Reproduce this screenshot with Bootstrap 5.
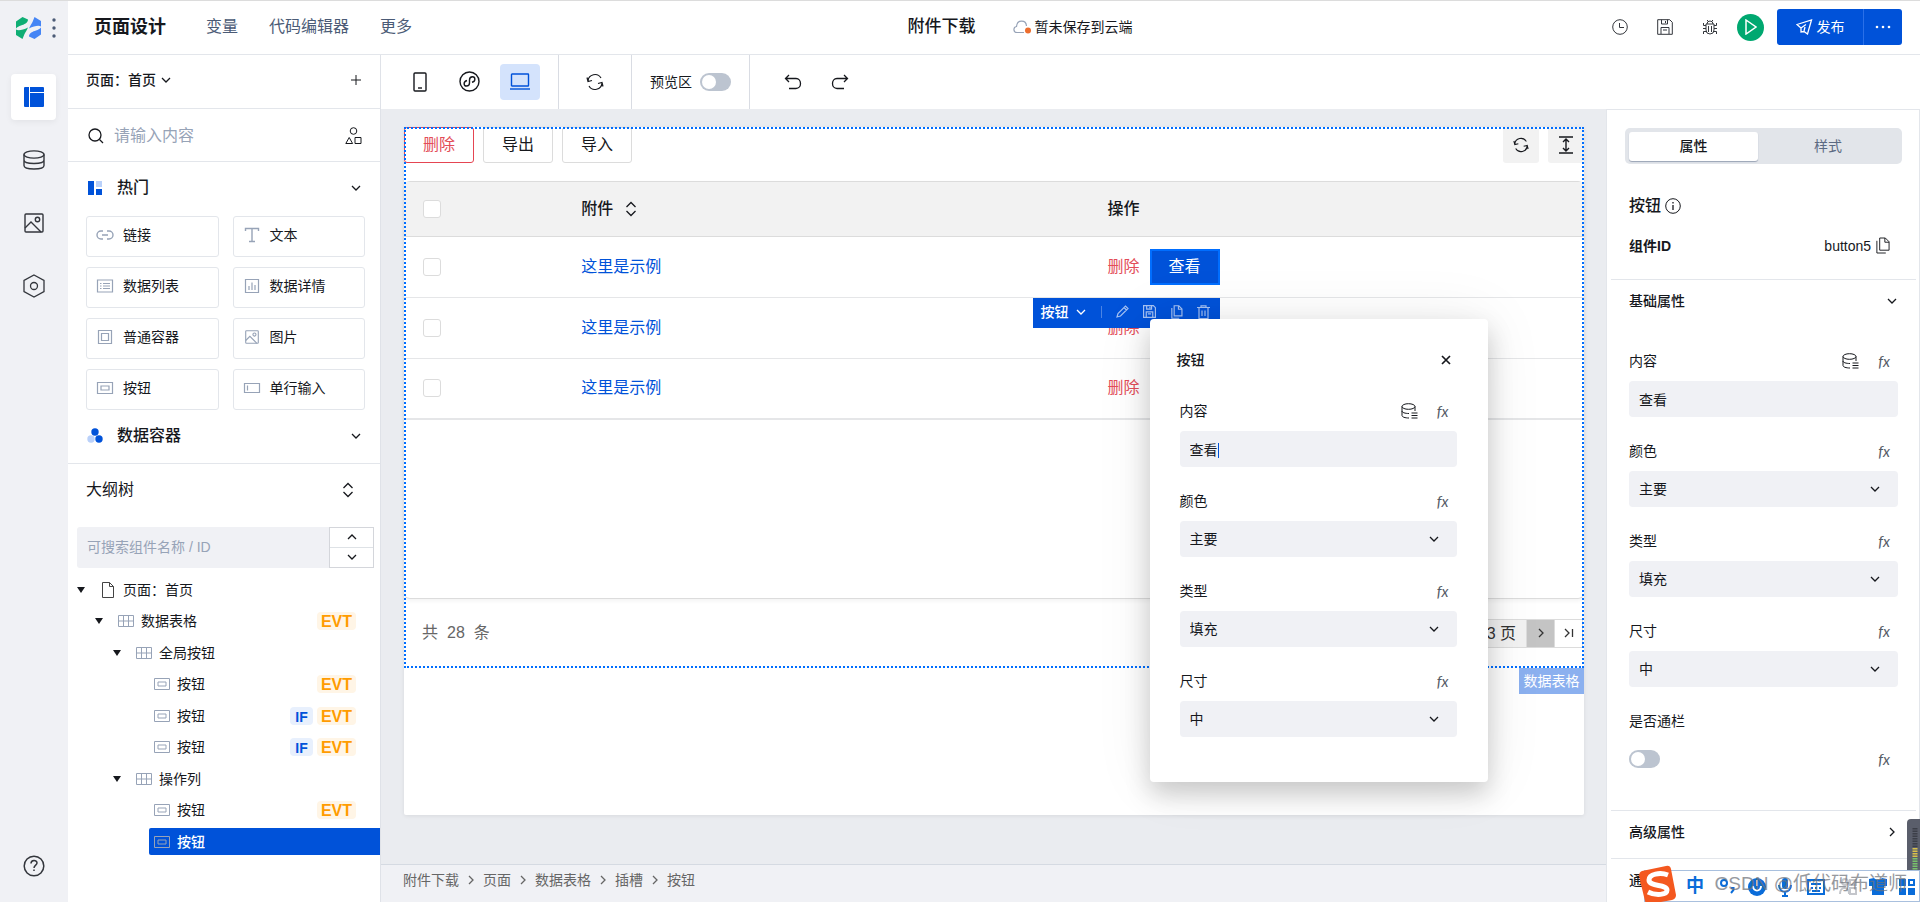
<!DOCTYPE html>
<html lang="zh-CN">
<head>
<meta charset="utf-8">
<meta name="viewport" content="width=device-width, initial-scale=1">
<title>页面设计</title>
<link rel="stylesheet" href="https://cdn.jsdelivr.net/npm/bootstrap@5.3.0/dist/css/bootstrap.min.css">
<style>
:root{--brand:#0052d9;--line:#e3e6eb;--soft:#f0f1f5;--ink:#16181d;--muted:#4b5b76;--icon:#97a3b7}
body{font-family:"Liberation Sans","Noto Sans CJK SC",sans-serif;font-size:14px;line-height:20px;color:var(--ink);border-top:1px solid #dcdcdc;overflow:hidden}
button{background:none;border:0;padding:0;color:inherit;line-height:inherit}
a{color:inherit;text-decoration:none}
svg{display:block;flex:none}
svg:not([fill]){fill:none}
svg:not([stroke]){stroke:currentColor}
.t16{font-size:16px;line-height:24px}
.t17{font-size:17px;line-height:24px}
.t18{font-size:18px;line-height:26px}
.bold{font-weight:500}
.edge-b{border-bottom:1px solid var(--line)}
/* icon rail */
.rail{width:68px;background:var(--soft);flex:none;color:#33363c}
.rail-logo{height:53px;padding:0 12px 0 16px}
.rail-btn{width:45px;height:46px;margin:0 0 17px 11px;border-radius:4px;display:grid;place-items:center}
.rail-btn.on{background:#fff;color:var(--brand);box-shadow:0 2px 6px #0000000f}
.rail-btn.help{margin-bottom:13px}
/* header */
.topbar{height:54px;padding:0 18px 0 26px}
.topbar .menu-links{gap:31px;color:var(--muted);margin-left:40px}
.cloud{margin:0 4px 0 37px}
.topbar .quick-acts{gap:29px;margin-right:19px}
.run{width:27px;height:27px;border-radius:50%;background:#00a870;color:#fff;display:grid;place-items:center}
.publish{background:var(--brand);color:#fff;height:36px;border-radius:3px;margin-left:13px}
.publish .more{width:39px;border-left:1px solid #2a70e8}
.publish .go{width:86px}
/* left panel */
.side{width:313px;flex:none;border-right:1px solid #dfe2e8}
.side .bar{padding:0 18px}
.side .page-row{height:54px;padding-bottom:3px}
.side .find-row{height:53px;padding-top:3px}
.side input{border:0;outline:0;background:none;color:var(--ink)}
.side input::placeholder{color:#97a3b7}
.comp-grid{display:grid;grid-template-columns:1fr 1fr;gap:10px 14px;padding:2px 15px 0 18px}
.comp{height:41px;border:1px solid var(--line);border-radius:3px;display:flex;align-items:center;gap:9px;padding:0 0 2px 9px}
.comp svg{color:var(--icon)}
.tree-search{margin:11px 6px 6px 9px;height:41px}
.tree-search input{background:var(--soft);border-radius:3px 0 0 3px;padding:0 10px}
.step{width:45px;border:1px solid #d4d6db}
.step button{display:grid;place-items:center}
.tree{height:284px;display:grid;grid-auto-rows:1fr;align-items:center;list-style:none;margin:0;padding:0}
.tree li{display:flex;align-items:center;height:27px;padding-right:24px}
.tree .caret{width:8px;margin-right:15px}
.tree .ico{width:16px;margin-right:7px;color:var(--icon)}
.lv0{margin-left:9px}.lv1{margin-left:27px}.lv2{margin-left:45px}.lv3{margin-left:81px;padding-left:5px}
.lv0 .ico{color:#444}
.tree .picked{background:var(--brand);color:#fff;border-radius:2px 0 0 2px;font-weight:500}
.tag{border-radius:4px;height:18px;line-height:20px;font-weight:700;text-align:center;margin-left:4px}
.tag-evt{width:39px;background:#fff5e6;color:#ff9c00}
.tag-if{width:23px;background:#e8f0fd;color:var(--brand)}
/* toolbar */
.tools{height:54px}
.tools .grp{display:flex;align-items:center;justify-content:center;border-right:1px solid #d9dce3}
.device{width:40px;height:36px;border-radius:4px;display:grid;place-items:center}
.device.on{background:#d4e3fc;color:var(--brand)}
.tgl.form-check-input{width:31px;height:18px;margin:0;border:0;border-radius:9px;background-color:#bcc4d0;background-size:auto;background-position:left 1px center;background-repeat:no-repeat;background-image:url("data:image/svg+xml,%3Csvg xmlns='http://www.w3.org/2000/svg' width='16' height='16'%3E%3Ccircle cx='8' cy='8' r='7' fill='%23fff'/%3E%3C/svg%3E")}
/* canvas */
.stage{background:#eaecf0;min-width:0}
.sheet{margin:18px 22px 49px 23px;background:#fff;border-radius:2px;box-shadow:0 1px 4px #00000014}
.grid-box{position:relative}
.grid-box::after{content:"";position:absolute;inset:0;border:2px dotted #006eff;pointer-events:none}
.act{height:36px;width:70px;border:1px solid #dcdcdc;border-radius:3px;line-height:34px}
.act.danger{border-color:#e54552}
.danger{color:#e34d59}
.sq{width:36px;height:36px;background:#f2f2f2;border-radius:3px;display:grid;place-items:center}
.table-box{margin-top:18px;height:418px;border:1px solid #dcdcdc;border-width:1px 0;border-radius:6px;box-shadow:0 2px 4px #0000000d}
.data{width:100%;table-layout:fixed;border-collapse:separate;border-spacing:0;font-size:16px}
.data th,.data td{padding:0 0 0 12px;border-bottom:1px solid #e5e6e8;height:61px}
.data th{height:55px;background:#f2f2f2;border-color:#dcdcdc;font-weight:500}
.data th:first-child,.data td:first-child{padding-left:19px}
.data tr:last-child td{border-bottom-width:2px}
.data .form-check-input{width:18px;height:18px;margin:0;border-color:#dcdcdc;border-radius:3px;display:block}
.data a{color:var(--brand)}
.anchor{position:relative}
.view-btn{width:70px;height:36px;background:var(--brand);border:2px solid #006eff;color:#fff;line-height:30px}
.quick{position:absolute;top:49px;right:0;width:187px;height:30px;background:var(--brand);color:#fff;z-index:2;padding:0 10px 2px 8px;font-size:14px}
.quick .dim{color:#a5c1f2}
.quick .sep{width:1px;height:12px;background:#4b84e4;margin:0 14px}
.pop{position:absolute;top:70px;left:0;width:338px;background:#fff;border-radius:4px;box-shadow:0 12px 26px #00000030,0 0 60px #00000014;z-index:3;padding:31px 31px 21px 30px;font-size:14px}
.pop-head{margin:0 6px 31px -3px}
.grid-foot{height:69px;padding:0 1px 0 18px;color:#666}
.pager{height:29px;border:1px solid #dcdcdc;color:#333}
.pager span{background:#f2f2f2;padding:0 10px 0 12px;line-height:27px}
.pager button{width:28px;border-left:1px solid #dcdcdc;display:grid;place-items:center}
.pager .next{background:#c4c4c4}
.box-tag{position:absolute;right:0;top:100%;height:26px;width:65px;background:#8bb0ef;color:#fff;text-align:center;line-height:26px}
.crumbs{height:38px;border-top:1px solid #d5dae2;background:var(--soft);color:#666;padding:5px 22px;gap:6px}
.crumbs svg{width:12px;height:20px}
/* fields */
.field{margin-bottom:24px}
.field .top{height:20px;margin-bottom:10px;padding-right:8px}
.field .src{margin-right:19px}
.ctl{display:block;width:100%;height:36px;border:0;border-radius:4px;background-color:#f0f1f5;padding:0 10px;color:var(--ink);font-size:14px;line-height:20px;outline:0}
select.ctl{appearance:none;background-repeat:no-repeat;background-position:right 17px center;background-image:url("data:image/svg+xml,%3Csvg xmlns='http://www.w3.org/2000/svg' width='12' height='12' fill='none' stroke='%2316181d' stroke-width='1.3'%3E%3Cpath d='M2 4l4 4 4-4'/%3E%3C/svg%3E")}
.fx{font:italic 15px/20px Lato,sans-serif;color:#555b66}
.cursor{position:absolute;left:38px;top:12px;width:1px;height:15px;background:var(--brand)}
/* property panel */
.props{width:314px;flex:none;border:1px solid var(--line);border-bottom:0;padding:18px 3px 0 4px;overflow:hidden}
.props .pad{padding:0 18px}
.props .fields{padding-top:24px}
.props .title-row{margin-top:30px}
.props .id-row{margin:18px 0 23px}
.props .switch-row{margin:18px 0 41px}
.seg{margin:0 14px;height:36px;background:#e2e5ea;border-radius:5px;padding:4px;color:#5c6a82}
.seg button{flex:1;height:29px;line-height:27px}
.seg .on{background:#fff;border-radius:3px;color:var(--ink);box-shadow:0 1px 1px #9aa3b5;flex:0 0 48%}
.sec{height:48px;border-top:1px solid var(--line)}
/* overlays from the desktop */
.meter{position:fixed;right:0;bottom:32px;width:13px;height:51px;background:#5a5e6b;border-radius:4px 0 0 0}
.ime{position:fixed;right:0;bottom:0;width:276px;height:32px;background:#fff;border:1px solid #a9c0de;color:#0a6cd9;font-size:18px;font-weight:700}
.ime .slot{position:absolute;top:0;height:30px;display:grid;place-items:center}
.ime .brand-mark{left:-8px;top:-6px;height:38px}
.credit{position:absolute;right:12px;top:0;line-height:26px;font-size:19px;font-weight:400;color:#6e727a;opacity:.72;white-space:nowrap}
</style>
</head>
<body>
<svg width="0" height="0" class="position-absolute" aria-hidden="true">
<symbol id="down" viewBox="0 0 12 12"><path d="M2 4l4 4 4-4" stroke-width="1.3"/></symbol>
<symbol id="up" viewBox="0 0 12 12"><path d="M2 8l4-4 4 4" stroke-width="1.3"/></symbol>
<symbol id="right" viewBox="0 0 12 12"><path d="M4 2l4 4-4 4" stroke-width="1.3"/></symbol>
<symbol id="updown" viewBox="0 0 12 16"><path d="M1.500 6L6 1.500 10.500 6M1.500 10L6 14.500 10.500 10" stroke-width="1.300"/></symbol>
<symbol id="caret" viewBox="0 0 8 6"><path d="M0 0h8L4 6z" fill="#16181d" stroke="none"/></symbol>
<symbol id="cells" viewBox="0 0 16 12"><path d="M.5.5h15v11H.5zM.5 6h15M5.500.5v11M10.500.5v11"/></symbol>
<symbol id="btn" viewBox="0 0 16 12"><path d="M.5.5h15v11H.5zM4 4h8v4H4z"/></symbol>
<symbol id="pic" viewBox="0 0 20 20"><rect x="1" y="1" width="18" height="18" rx="1"/><circle cx="13.500" cy="6.500" r="2.200"/><path d="M1 15l6-6 10 10"/></symbol>
<symbol id="copy" viewBox="0 0 16 18"><path d="M5 1h6l4 4v9H5zM10.500 1v4.500H15M2 4v13h9.500"/></symbol>
<symbol id="save" viewBox="0 0 16 16"><path d="M.7.7h12l2.600 2.600v12H.7zM4.500.7V5h6V.7M8.500 2v2M4 15V8.500h8V15M6 11h4"/></symbol>
<symbol id="dblist" viewBox="0 0 17 16"><ellipse cx="7.500" cy="3.500" rx="6.500" ry="2.800"/><path d="M1 3.500v9c0 1.500 3 2.500 7 2.500M14 3.500V8M1 8c0 1.500 3 2.500 7 2.500M10.500 10h6M10.500 12.500h6M10.500 15h6"/></symbol>
<symbol id="sync" viewBox="0 0 18 18"><path d="M2 8a7 7 0 0 1 13-3M16 10a7 7 0 0 1-13 3M1 4.500L2 8.500l4-1M17 13.500l-1-4-4 1" stroke-width="1.200"/></symbol>
</svg>

<div class="d-flex" style="height:calc(100vh - 1px)">
 <nav class="rail d-flex flex-column" aria-label="主导航">
  <div class="rail-logo d-flex align-items-center justify-content-between">
   <svg width="25" height="22" viewBox="0 0 25 22" stroke="none"><path d="M0 4.500L6.500 0 12 2.500C12 6 8 7.500 5 8.500 3 9.200 1.200 10 0 11.500zM0 12.500C2 14 7 13 12 10.500 11 13 9.500 15 8.500 17L6.500 22 0 18z" fill="#0fae74"/><path d="M25 17.500L18.500 22 13 19.500C13 16 17 14.500 20 13.500c2-.7 3.800-1.500 5-3zM25 9.500C23 8 18 9 13 11.500 14 9 15.500 7 16.500 5L18.500 0 25 4z" fill="#4585f5"/></svg>
   <svg width="4" height="20" viewBox="0 0 4 20" stroke="none" fill="#4b5b76"><circle cx="2" cy="2" r="1.700"/><circle cx="2" cy="10" r="1.700"/><circle cx="2" cy="18" r="1.700"/></svg>
  </div>
  <div class="pt-1 mt-3"></div>
  <button class="rail-btn on" aria-label="页面"><svg width="20" height="20" viewBox="0 0 20 20" fill="currentColor" stroke="none"><path d="M1 0h4v20H1a1 1 0 0 1-1-1V1a1 1 0 0 1 1-1zM6 0h13a1 1 0 0 1 1 1v4H6zM6 6h14v13a1 1 0 0 1-1 1H6z"/></svg></button>
  <button class="rail-btn" aria-label="数据"><svg width="22" height="20" viewBox="0 0 22 20" stroke-width="1.400"><ellipse cx="11" cy="4.500" rx="10" ry="3.600"/><path d="M1 4.500v11C1 17.500 5 19 11 19s10-1.500 10-3.500v-11M1 10c0 2 4 3.500 10 3.500S21 12 21 10"/></svg></button>
  <button class="rail-btn" aria-label="素材"><svg width="20" height="20" stroke-width="1.400"><use href="#pic"/></svg></button>
  <button class="rail-btn" aria-label="设置"><svg width="22" height="24" viewBox="0 0 22 24" stroke-width="1.300"><path d="M11 1l10 5.500v11L11 23 1 17.500v-11z"/><circle cx="11" cy="12" r="3.500"/></svg></button>
  <button class="rail-btn help mt-auto" aria-label="帮助"><svg width="22" height="22" viewBox="0 0 22 22" stroke-width="1.500"><circle cx="11" cy="11" r="9.800"/><path d="M8 8.500c0-4 6-4 6-.5 0 2-3 2.300-3 5M11 14.500V16"/></svg></button>
 </nav>

 <div class="d-flex flex-column flex-fill" style="min-width:0">
  <header class="topbar edge-b d-flex align-items-center">
   <div class="d-flex align-items-center flex-fill" style="flex-basis:0">
    <h1 class="t18 fw-bold m-0">页面设计</h1>
    <nav class="menu-links d-flex t16"><a href="#">变量</a><a href="#">代码编辑器</a><a href="#">更多</a></nav>
   </div>
   <div class="d-flex align-items-center ms-3">
    <span class="t17 bold">附件下载</span>
    <svg class="cloud" width="18" height="14" viewBox="0 0 18 14" stroke="#97a3b7" stroke-width="1.200"><path d="M11 12.500H4c-4 0-4-5.500-.5-6C4-.5 13-.5 13.500 6"/><circle cx="15" cy="10.500" r="3" fill="#ed6d2d" stroke="none"/></svg>
    <span>暂未保存到云端</span>
   </div>
   <div class="d-flex align-items-center justify-content-end flex-fill" style="flex-basis:0">
    <div class="quick-acts d-flex align-items-center">
     <button aria-label="历史"><svg width="16" height="16" viewBox="0 0 16 16" stroke="#33363c"><circle cx="8" cy="8" r="7.300"/><path d="M7.500 4v4.500H12"/></svg></button>
     <button aria-label="保存"><svg width="16" height="16" stroke="#33363c"><use href="#save"/></svg></button>
     <button aria-label="调试"><svg width="16" height="16" viewBox="0 0 16 16" stroke="#33363c"><path d="M4 5h8v6a4 4 0 0 1-8 0zM5 5a3 3 0 0 1 6 0M1.500 4v2.500H4M14.500 4v2.500H12M1 9.500h3M15 9.500h-3M1.500 15v-2.500H4M14.500 15v-2.500H12M6.500 7v6M9.500 7v6M5 1l1.500 1.500M11 1L9.500 2.500"/></svg></button>
    </div>
    <button class="run" aria-label="运行"><svg width="12" height="16" viewBox="0 0 12 16" stroke-width="1.500"><path d="M1 1l10 7-10 7z"/></svg></button>
    <div class="publish d-flex">
     <button class="go d-flex align-items-center justify-content-center gap-1"><svg width="17" height="16" viewBox="0 0 17 16" stroke-width="1.300"><path d="M1 5.500L15.500 1 11.500 15 8 12.500 5 13V9zM5 9l5-3.500M8 12l1-4"/></svg>发布</button>
     <button class="more d-flex align-items-center justify-content-center" aria-label="更多"><svg width="16" height="4" viewBox="0 0 16 4" fill="#fff" stroke="none"><circle cx="2" cy="2" r="1.300"/><circle cx="8" cy="2" r="1.300"/><circle cx="14" cy="2" r="1.300"/></svg></button>
    </div>
   </div>
  </header>

  <div class="d-flex flex-fill" style="min-height:0">
   <aside class="side">
    <div class="bar page-row edge-b d-flex align-items-center">
     <button class="bold d-flex align-items-center gap-1">页面：首页<svg width="12" height="12"><use href="#down"/></svg></button>
     <button class="ms-auto" aria-label="新建"><svg width="12" height="12" viewBox="0 0 12 12"><path d="M6 1v10M1 6h10"/></svg></button>
    </div>
    <label class="bar find-row edge-b d-flex align-items-center">
     <svg style="margin:0 8px 0 2px" width="16" height="16" viewBox="0 0 16 16" stroke-width="1.300"><circle cx="7" cy="7" r="6"/><path d="M11.500 11.500L15 15"/></svg>
     <input class="t16 flex-fill" placeholder="请输入内容" aria-label="搜索组件" style="min-width:0">
     <svg width="17" height="18" viewBox="0 0 17 18"><circle cx="8.500" cy="4" r="3.300"/><path d="M.8 16.500l3.400-6 3.400 6zM10 10.500h6v6h-6z"/></svg>
    </label>
    <div class="bar d-flex align-items-center" style="height:52px">
     <svg style="margin:0 15px 0 2px" width="14" height="14" viewBox="0 0 14 14" stroke="none"><path d="M0 0h6v14H0zM8 8h6v6H8z" fill="#0052d9"/><path d="M8 0h6v6H8z" fill="#bad1fa"/></svg>
     <span class="t16 bold">热门</span><svg class="ms-auto" width="12" height="12"><use href="#down"/></svg>
    </div>
    <div class="comp-grid">
     <div class="comp"><svg width="18" height="18" viewBox="0 0 18 18" stroke-width="1.400"><path d="M7 5H5a4 4 0 0 0 0 8h2M11 5h2a4 4 0 0 1 0 8h-2M6 9h6"/></svg>链接</div>
     <div class="comp"><svg width="18" height="18" viewBox="0 0 18 18" stroke-width="1.400"><path d="M2.500 5V2.500h13V5M9 2.500v13M6 15.500h6"/></svg>文本</div>
     <div class="comp"><svg width="18" height="18" viewBox="0 0 18 18" stroke-width="1.200"><path d="M1.500 3h15v12h-15zM4 6.500h1.500M7 6.500h7M4 9h1.500M7 9h7M4 11.500h1.500M7 11.500h7"/></svg>数据列表</div>
     <div class="comp"><svg width="18" height="18" viewBox="0 0 18 18" stroke-width="1.200"><path d="M2.500 2.500h13v13h-13zM6 9v4M9 5.500V13M12 8v5"/></svg>数据详情</div>
     <div class="comp"><svg width="18" height="18" viewBox="0 0 18 18" stroke-width="1.200"><path d="M2.500 2.500h13v13h-13zM5.500 5.500h7v7h-7z"/></svg>普通容器</div>
     <div class="comp"><svg width="18" height="14" stroke-width="1.600"><use href="#pic"/></svg>图片</div>
     <div class="comp"><svg width="18" height="12" stroke-width="1.200"><use href="#btn"/></svg>按钮</div>
     <div class="comp"><svg width="18" height="18" viewBox="0 0 18 18" stroke-width="1.200"><path d="M1.500 4.500h15v9h-15zM4.500 6.500v5"/></svg>单行输入</div>
    </div>
    <div class="bar edge-b d-flex align-items-center" style="height:54px">
     <svg style="margin:0 14px 0 1px" width="16" height="16" viewBox="0 0 16 16" stroke="none" fill="#0052d9"><circle cx="8" cy="4" r="3.700"/><circle cx="4" cy="11" r="3.700" fill="#bad1fa"/><circle cx="12" cy="11" r="3.700"/></svg>
     <span class="t16 bold">数据容器</span><svg class="ms-auto" width="12" height="12"><use href="#down"/></svg>
    </div>
    <div class="bar d-flex align-items-center" style="height:52px"><span class="t16">大纲树</span><svg class="ms-auto me-2" width="12" height="16"><use href="#updown"/></svg></div>
    <div class="tree-search d-flex">
     <input class="flex-fill" placeholder="可搜索组件名称 / ID" aria-label="搜索大纲树">
     <div class="step d-flex flex-column"><button class="flex-fill border-bottom" aria-label="上一个"><svg width="12" height="12"><use href="#up"/></svg></button><button class="flex-fill" aria-label="下一个"><svg width="12" height="12"><use href="#down"/></svg></button></div>
    </div>
    <ul class="tree">
     <li class="lv0"><svg class="caret" height="6"><use href="#caret"/></svg><svg class="ico" height="16" viewBox="0 0 16 16"><path d="M2.500.5h7l4 4v11h-11zM9.500.5v4h4"/></svg>页面：首页</li>
     <li class="lv1"><svg class="caret" height="6"><use href="#caret"/></svg><svg class="ico" height="12"><use href="#cells"/></svg>数据表格<span class="tag tag-evt t16 ms-auto">EVT</span></li>
     <li class="lv2"><svg class="caret" height="6"><use href="#caret"/></svg><svg class="ico" height="12"><use href="#cells"/></svg>全局按钮</li>
     <li class="lv3"><svg class="ico" height="12"><use href="#btn"/></svg>按钮<span class="tag tag-evt t16 ms-auto">EVT</span></li>
     <li class="lv3"><svg class="ico" height="12"><use href="#btn"/></svg>按钮<span class="tag tag-if ms-auto">IF</span><span class="tag tag-evt t16">EVT</span></li>
     <li class="lv3"><svg class="ico" height="12"><use href="#btn"/></svg>按钮<span class="tag tag-if ms-auto">IF</span><span class="tag tag-evt t16">EVT</span></li>
     <li class="lv2"><svg class="caret" height="6"><use href="#caret"/></svg><svg class="ico" height="12"><use href="#cells"/></svg>操作列</li>
     <li class="lv3"><svg class="ico" height="12"><use href="#btn"/></svg>按钮<span class="tag tag-evt t16 ms-auto">EVT</span></li>
     <li class="lv3 picked"><svg class="ico" height="12"><use href="#btn"/></svg>按钮</li>
    </ul>
   </aside>

   <div class="d-flex flex-column flex-fill" style="min-width:0">
    <div class="tools d-flex">
     <div class="grp" style="width:178px;gap:10px">
      <button class="device" aria-label="手机"><svg width="14" height="20" viewBox="0 0 14 20" stroke-width="1.400"><rect x="1" y="1" width="12" height="18" rx="1"/><path d="M5 16h4"/></svg></button>
      <button class="device" aria-label="小程序"><svg width="21" height="21" viewBox="0 0 21 21" stroke-width="1.400"><circle cx="10.500" cy="10.500" r="9.500"/><path d="M8 9.500c-4 1-3.500 5.500-.5 5.500 2 0 3-1.200 3-3V9c0-2 1-3.200 3-3.200 3 0 3.500 4.500-.5 5.500"/></svg></button>
      <button class="device on" aria-label="电脑"><svg width="20" height="17" viewBox="0 0 20 17" stroke-width="1.400"><rect x="1.500" y="1" width="17" height="12" rx=".5"/><path d="M0 16h20"/></svg></button>
     </div>
     <div class="grp" style="width:73px"><button aria-label="刷新"><svg width="18" height="18"><use href="#sync"/></svg></button></div>
     <div class="grp" style="width:118px;gap:8px"><label for="preview">预览区</label><input id="preview" class="form-check-input tgl" type="checkbox" role="switch"></div>
     <div class="d-flex align-items-center" style="gap:29px;padding-left:34px">
      <button aria-label="撤销"><svg width="18" height="16" viewBox="0 0 18 16" stroke-width="1.300"><path d="M5 1L1.500 4.500 5 8M1.500 4.500H12c6 0 6 10 0 10H5"/></svg></button>
      <button aria-label="重做"><svg width="18" height="16" viewBox="0 0 18 16" stroke-width="1.300"><path d="M13 1l3.500 3.500L13 8M16.500 4.500H6c-6 0-6 10 0 10h7"/></svg></button>
     </div>
    </div>

    <div class="d-flex flex-fill" style="min-height:0">
     <main class="stage d-flex flex-column flex-fill">
      <div class="sheet flex-fill">
       <section class="grid-box">
        <div class="d-flex t16" style="gap:9px">
         <button class="act danger">删除</button><button class="act">导出</button><button class="act">导入</button>
         <button class="sq ms-auto" aria-label="刷新"><svg width="16" height="16"><use href="#sync"/></svg></button>
         <button class="sq" aria-label="行高"><svg width="14" height="18" viewBox="0 0 14 18" stroke-width="1.400"><path d="M0 1h14M0 17h14M7 3v12M4 6l3-3 3 3M4 12l3 3 3-3"/></svg></button>
        </div>
        <div class="table-box">
         <table class="data">
          <colgroup><col style="width:14%"><col style="width:44.6%"><col></colgroup>
          <thead><tr><th><input class="form-check-input" type="checkbox" aria-label="全选"></th><th><div class="d-flex align-items-center" style="gap:12px">附件<svg width="12" height="16"><use href="#updown"/></svg></div></th><th>操作</th></tr></thead>
          <tbody>
           <tr><td><input class="form-check-input" type="checkbox" aria-label="选择第1行"></td><td><a href="#">这里是示例</a></td><td>
            <div class="d-flex align-items-center" style="gap:10px"><button class="danger">删除</button>
             <div class="anchor"><button class="view-btn">查看</button>
              <div class="quick d-flex align-items-center">
               <button class="bold d-flex align-items-center" style="gap:6px">按钮<svg width="12" height="12"><use href="#down"/></svg></button><span class="sep"></span>
               <div class="dim d-flex align-items-center justify-content-between flex-fill">
                <button aria-label="编辑"><svg width="13" height="13" viewBox="0 0 13 13" stroke-width="1.200"><path d="M1 12l1-3.500L9.500 1 12 3.500 4.500 11zM8 2.500L10.500 5"/></svg></button>
                <button aria-label="保存"><svg width="13" height="13" stroke-width="1.500"><use href="#save"/></svg></button>
                <button aria-label="复制"><svg width="13" height="14" stroke-width="1.500"><use href="#copy"/></svg></button>
                <button aria-label="删除组件"><svg width="13" height="14" viewBox="0 0 13 14" stroke-width="1.200"><path d="M0 2.500h13M4 2.500V.8h5v1.700M2 2.500v11h9v-11M5 5.500V11M8 5.500V11"/></svg></button>
               </div>
              </div>
              <div class="pop">
               <div class="pop-head d-flex align-items-center justify-content-between"><span class="bold">按钮</span><button aria-label="关闭"><svg width="10" height="10" viewBox="0 0 10 10" stroke-width="1.700"><path d="M1 1l8 8M9 1L1 9"/></svg></button></div>
               <div class="field"><div class="top d-flex align-items-center"><label for="p1">内容</label><svg class="src ms-auto" width="17" height="16"><use href="#dblist"/></svg><button class="fx">fx</button></div><div class="position-relative"><input id="p1" class="ctl" value="查看"><span class="cursor"></span></div></div>
               <div class="field"><div class="top d-flex justify-content-between"><label for="p2">颜色</label><button class="fx">fx</button></div><select id="p2" class="ctl"><option>主要</option></select></div>
               <div class="field"><div class="top d-flex justify-content-between"><label for="p3">类型</label><button class="fx">fx</button></div><select id="p3" class="ctl"><option>填充</option></select></div>
               <div class="field"><div class="top d-flex justify-content-between"><label for="p4">尺寸</label><button class="fx">fx</button></div><select id="p4" class="ctl"><option>中</option></select></div>
              </div>
             </div></div></td></tr>
           <tr><td><input class="form-check-input" type="checkbox" aria-label="选择第2行"></td><td><a href="#">这里是示例</a></td><td><button class="danger">删除</button></td></tr>
           <tr><td><input class="form-check-input" type="checkbox" aria-label="选择第3行"></td><td><a href="#">这里是示例</a></td><td><button class="danger">删除</button></td></tr>
          </tbody>
         </table>
        </div>
        <div class="grid-foot t16 d-flex align-items-center justify-content-between">
         <div class="d-flex" style="gap:9px"><span>共</span><span>28</span><span>条</span></div>
         <div class="pager d-flex"><span>1 / 3 页</span><button class="next" aria-label="下一页"><svg width="12" height="12"><use href="#right"/></svg></button><button aria-label="末页"><svg width="12" height="12" viewBox="0 0 12 12" stroke-width="1.300"><path d="M2 2l4 4-4 4M9.500 2v8"/></svg></button></div>
        </div>
        <span class="box-tag">数据表格</span>
       </section>
      </div>
      <nav class="crumbs d-flex align-items-start" aria-label="路径">
       <a href="#">附件下载</a><svg viewBox="0 0 12 12"><use href="#right"/></svg><a href="#">页面</a><svg viewBox="0 0 12 12"><use href="#right"/></svg><a href="#">数据表格</a><svg viewBox="0 0 12 12"><use href="#right"/></svg><a href="#">插槽</a><svg viewBox="0 0 12 12"><use href="#right"/></svg><a href="#">按钮</a>
      </nav>
     </main>

     <aside class="props">
      <div class="seg d-flex"><button class="on bold">属性</button><button>样式</button></div>
      <div class="pad title-row d-flex align-items-center gap-1"><span class="t16 bold">按钮</span><svg width="16" height="16" viewBox="0 0 16 16"><circle cx="8" cy="8" r="7.300"/><path d="M8 7v5M8 4v1.500" stroke-width="1.300"/></svg></div>
      <div class="pad id-row d-flex align-items-center"><span class="fw-bold">组件ID</span><span class="ms-auto me-1">button5</span><button class="me-2" aria-label="复制ID"><svg width="15" height="17"><use href="#copy"/></svg></button></div>
      <div class="pad sec d-flex align-items-center justify-content-between pb-1"><span class="bold">基础属性</span><svg width="12" height="12"><use href="#down"/></svg></div>
      <div class="pad fields">
       <div class="field"><div class="top d-flex align-items-center"><label for="q1">内容</label><svg class="src ms-auto" width="17" height="16"><use href="#dblist"/></svg><button class="fx">fx</button></div><input id="q1" class="ctl" value="查看"></div>
       <div class="field"><div class="top d-flex justify-content-between"><label for="q2">颜色</label><button class="fx">fx</button></div><select id="q2" class="ctl"><option>主要</option></select></div>
       <div class="field"><div class="top d-flex justify-content-between"><label for="q3">类型</label><button class="fx">fx</button></div><select id="q3" class="ctl"><option>填充</option></select></div>
       <div class="field"><div class="top d-flex justify-content-between"><label for="q4">尺寸</label><button class="fx">fx</button></div><select id="q4" class="ctl"><option>中</option></select></div>
       <label for="q5">是否通栏</label>
       <div class="switch-row d-flex align-items-center justify-content-between pe-2"><input id="q5" class="form-check-input tgl" type="checkbox" role="switch"><button class="fx">fx</button></div>
      </div>
      <div class="pad sec d-flex align-items-center justify-content-between pb-1"><span class="bold">高级属性</span><svg width="12" height="12"><use href="#right"/></svg></div>
      <div class="pad sec d-flex align-items-center justify-content-between pb-1"><span class="bold">通用属性</span><svg width="12" height="12"><use href="#right"/></svg></div>
     </aside>
    </div>
   </div>
  </div>
 </div>
</div>

<div class="meter"><svg width="13" height="51" viewBox="0 0 13 51" stroke-width="5" stroke-dasharray="1.500 1"><path d="M8 9v20" stroke="#3c3f49"/><path d="M8 29v10" stroke="#d9c24a"/><path d="M8 39v12" stroke="#79c26a"/></svg></div>
<div class="ime">
 <svg class="slot brand-mark" width="40" viewBox="0 0 40 38" stroke="none"><path d="M5 6L29 1q4-1 5 3l5 26q0 4-4 5l-22 4q-4 1-5-3L2 11q0-4 3-5z" fill="#f4581f"/><path d="M31 10c-8-3-19-1-19 5 0 7 18 4 18 10 0 5-11 6-19 2" stroke="#fff" stroke-width="5" fill="none"/></svg>
 <span class="slot" style="left:41px">中</span>
 <svg class="slot" style="left:75px" width="16" viewBox="0 0 16 30"><circle cx="4" cy="12" r="3" stroke-width="2"/><path d="M11 17h2.500v2L11 22" stroke-width="2"/></svg>
 <svg class="slot" style="left:103px" width="18" viewBox="0 0 18 30"><circle cx="9" cy="16" r="9" fill="#0a6cd9" stroke="none"/><path d="M5 15c0 6 8 6 8 0M9 9v6" stroke="#fff" stroke-width="2"/></svg>
 <svg class="slot" style="left:132px" width="16" viewBox="0 0 16 30"><rect x="5" y="7" width="6" height="11" rx="3" fill="#0a6cd9" stroke="none"/><path d="M2 14c0 9 12 9 12 0M8 20v5M5 25h6" stroke-width="2"/></svg>
 <svg class="slot" style="left:161px" width="20" viewBox="0 0 20 30" stroke-width="2"><path d="M2 9h16v14H2zM5 13h10M5 17h2M9 17h2M13 17h2M6 20h8"/></svg>
 <svg class="slot" style="left:193px" width="20" viewBox="0 0 20 30" stroke="#c4c6cb" stroke-width="2"><circle cx="7" cy="11" r="3"/><path d="M2 23c0-8 9-8 9 0M12 9h6v5h-6zM12 17h6v6h-6z"/></svg>
 <svg class="slot" style="left:223px" width="20" viewBox="0 0 20 30" fill="#0a6cd9" stroke="none"><path d="M1 8l5-1c2 2 6 2 8 0l5 1v7h-3v9H4v-9H1z"/></svg>
 <svg class="slot" style="left:253px" width="18" viewBox="0 0 18 30" stroke-width="2"><path d="M2 9h5v5H2zM2 18h5v5H2zM11 18h5v5h-5z" fill="#0a6cd9"/><path d="M11 9h5v5h-5z"/></svg>
 <span class="credit">CSDN @低代码布道师</span>
</div>
<script src="https://cdn.jsdelivr.net/npm/bootstrap@5.3.0/dist/js/bootstrap.bundle.min.js"></script>
</body>
</html>
